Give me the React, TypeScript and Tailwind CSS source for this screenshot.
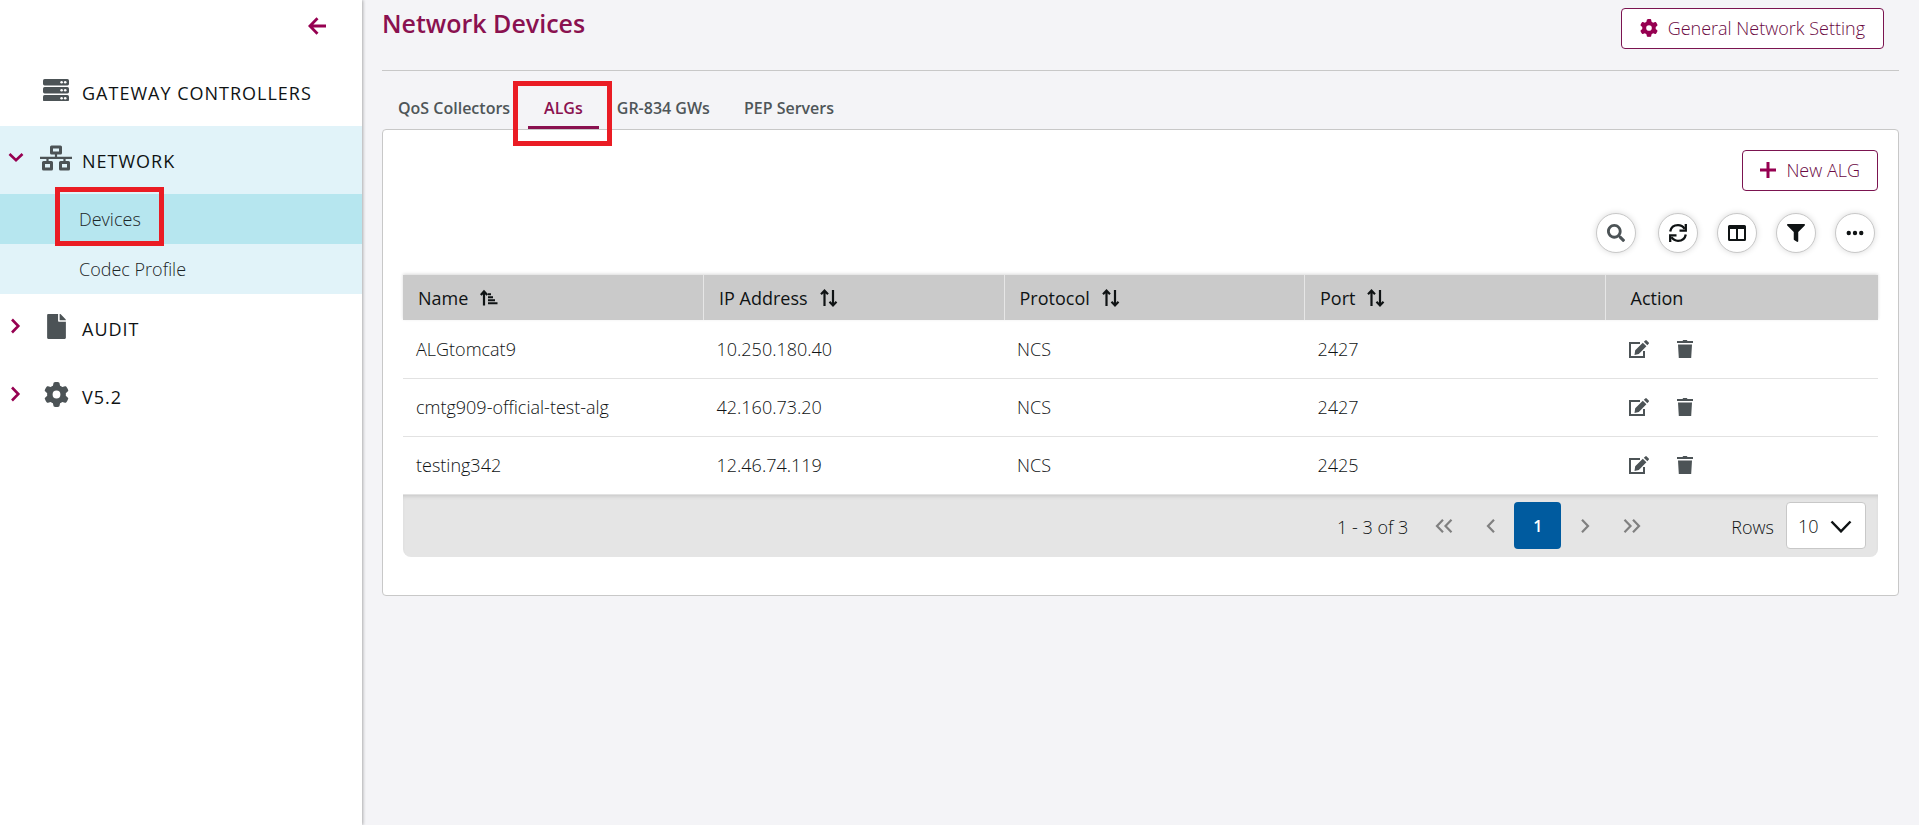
import type { ReactNode } from "react";
import { FaFile, FaFilter, FaSearch } from "react-icons/fa";
import { FaEllipsis, FaGear } from "react-icons/fa6";

function ServerIcon() {
  return (
    <svg width="26" height="22" viewBox="0 0 26 22" fill="currentColor" aria-hidden="true">
      {[0, 8, 16].map((y) => (
        <g key={y}>
          <rect x="0" y={y} width="26" height="6.4" rx="1.6" />
          <circle cx="18.6" cy={y + 3.2} r="1.3" fill="#fff" />
          <circle cx="22.2" cy={y + 3.2} r="1.3" fill="#fff" />
        </g>
      ))}
    </svg>
  );
}

function NetworkIcon() {
  return (
    <svg width="32" height="26" viewBox="0 0 32 26" fill="none" stroke="currentColor" aria-hidden="true">
      <g strokeWidth="3" strokeLinejoin="round">
        <rect x="11.5" y="2" width="9" height="6" />
        <rect x="3.5" y="17.5" width="8" height="6.5" />
        <rect x="20.5" y="17.5" width="8" height="6.5" />
      </g>
      <path d="M0 12.8h32M16 9v4M7.5 13v4M24.5 13v4" strokeWidth="2.2" />
    </svg>
  );
}

function ArrowIcon() {
  return (
    <svg width="18" height="18" viewBox="0 0 18 18" fill="none" stroke="currentColor" strokeWidth="2.8" aria-hidden="true">
      <path d="M18 9H2.500M9.500 1.200 1.900 9l7.600 7.800" />
    </svg>
  );
}

function ChevronIcon({ down = false }: { down?: boolean }) {
  return (
    <svg width="16" height="16" viewBox="0 0 16 16" fill="none" stroke="currentColor" strokeWidth="2.600" className={down ? "rotate-90" : ""} aria-hidden="true">
      <path d="m4 1.500 6.300 6.500L4 14.500" />
    </svg>
  );
}

function PlusIcon() {
  return (
    <svg width="16" height="16" viewBox="0 0 16 16" fill="none" stroke="currentColor" strokeWidth="3" aria-hidden="true">
      <path d="M8 0v16M0 8h16" />
    </svg>
  );
}

function SyncIcon() {
  return (
    <svg width="20" height="20" viewBox="0 0 20 20" fill="none" stroke="currentColor" strokeWidth="2.300" aria-hidden="true">
      <path d="M2.200 8.600C3 4.600 6.200 2.200 10 2.200c2.800 0 5 1.200 6.600 3.600" />
      <path d="M17.800 1v6.600H11.500" />
      <path d="M17.800 11.400C17 15.400 13.800 17.800 10 17.800c-2.800 0-5-1.200-6.600-3.600" />
      <path d="M2.200 19v-6.600H8.500" />
    </svg>
  );
}

function ColumnsIcon() {
  return (
    <svg width="18" height="16" viewBox="0 0 18 16" fill="currentColor" aria-hidden="true">
      <path fillRule="evenodd" d="M1.500 0h15A1.500 1.500 0 0 1 18 1.500v13a1.500 1.500 0 0 1-1.500 1.500h-15A1.500 1.500 0 0 1 0 14.500v-13A1.500 1.500 0 0 1 1.500 0ZM2 4v10h6V4H2Zm8 0v10h6V4h-6Z" />
    </svg>
  );
}

function SortIcon() {
  return (
    <svg width="18" height="18" viewBox="0 0 18 18" fill="none" stroke="currentColor" strokeWidth="2.200" aria-hidden="true">
      <path d="M4.500 17V2M1 5.200 4.500 1.600 8 5.200" />
      <path d="M13 1v15M9.500 12.800 13 16.400l3.500-3.600" />
    </svg>
  );
}

function SortAscIcon() {
  return (
    <svg width="18" height="18" viewBox="0 0 18 18" fill="none" stroke="currentColor" strokeWidth="2.200" aria-hidden="true">
      <path d="M4 16.500V3M.8 6 4 2.400 7.300 6" />
      <path d="M8 5.200h3M8 8.200h5M8 11.200h7M8 14.200h9.500" strokeWidth="2" />
    </svg>
  );
}

function EditIcon() {
  return (
    <svg width="20" height="18" viewBox="0 0 20 18" aria-hidden="true">
      <path d="M11 3H1v14h14v-6" fill="none" stroke="currentColor" strokeWidth="2" />
      <path d="M5.500 15 6.200 10.300 13.800 2.700l3.600 3.600-7.600 7.600L5.500 15ZM14.800 1.800l1.500-1.400a1 1 0 0 1 1.400 0l2 2a1 1 0 0 1 0 1.400L18.300 5.300 14.800 1.800Z" fill="currentColor" />
    </svg>
  );
}

function TrashIcon() {
  return (
    <svg width="16" height="18" viewBox="0 0 16 18" fill="currentColor" aria-hidden="true">
      <path d="M5.500 1 6.200 0h3.600l.7 1H16v2H0V1h5.500ZM1 4.500h14L14.200 18H1.800L1 4.500Z" />
    </svg>
  );
}

function Angle({ double = false, flip = false }: { double?: boolean; flip?: boolean }) {
  return (
    <svg width="18" height="14" viewBox="0 0 18 14" fill="none" stroke="currentColor" strokeWidth="2.200" className={flip ? "rotate-180" : ""} aria-hidden="true">
      {double ? <path d="M8 .8 2 7l6 6.200M16.500.8l-6 6.200 6 6.200" /> : <path d="M12 .8 6 7l6 6.200" />}
    </svg>
  );
}

function Mark({ className }: { className: string }) {
  return <span aria-hidden="true" className={`pointer-events-none absolute z-10 border-[5px] border-[#ea1c24] ${className}`} />;
}

function NavItem({ icon, label, chevron, active = false }: { icon: ReactNode; label: string; chevron?: ReactNode; active?: boolean }) {
  return (
    <a href="#" className={`flex h-[68px] items-center ${active ? "bg-[#e1f3f9]" : ""}`}>
      <span className="flex w-8 justify-center pb-1 text-[#960051]">{chevron}</span>
      <span className="flex w-12 justify-center pb-1 text-[#4c5356]">{icon}</span>
      <span className="pt-0.5 pl-0.5 text-lg font-medium tracking-[1px]">{label}</span>
    </a>
  );
}

function RoundButton({ label, children }: { label: string; children: ReactNode }) {
  return (
    <button aria-label={label} className="flex size-10 items-center justify-center rounded-full border border-[#c8c8c8] bg-white shadow-[0_0_6px_rgba(0,0,0,0.15)]">
      {children}
    </button>
  );
}

const tabs = ["QoS Collectors", "ALGs", "GR-834 GWs", "PEP Servers"];
const columns = ["Name", "IP Address", "Protocol", "Port"];
const rows = [
  ["ALGtomcat9", "10.250.180.40", "NCS", "2427"],
  ["cmtg909-official-test-alg", "42.160.73.20", "NCS", "2427"],
  ["testing342", "12.46.74.119", "NCS", "2425"],
];

export default function App() {
  return (
    <div className="flex min-h-screen bg-[#f4f4f7] font-['Open_Sans',sans-serif] text-lg font-light text-[#0f1314]">
      <aside className="w-[362px] shrink-0 bg-white shadow-[1px_0_3px_rgba(0,0,0,0.3)]">
        <div className="flex h-[58px] justify-end pt-4 pr-9">
          <button aria-label="Collapse menu" className="flex h-5 items-center text-[#960051]">
            <ArrowIcon />
          </button>
        </div>
        <nav>
          <NavItem icon={<ServerIcon />} label="GATEWAY CONTROLLERS" />
          <NavItem active icon={<NetworkIcon />} label="NETWORK" chevron={<ChevronIcon down />} />
          <a href="#" aria-current="page" className="relative flex h-[50px] items-center bg-[#b6e6ef] pl-[79px] text-[#1c2527]">
            Devices
            <Mark className="-top-[7px] left-[55px] h-[59px] w-[109px]" />
          </a>
          <a href="#" className="flex h-[50px] items-center bg-[#e1f3f9] pl-[79px] text-[#1c2527]">
            Codec Profile
          </a>
          <NavItem icon={<FaFile size={25} />} label="AUDIT" chevron={<ChevronIcon />} />
          <NavItem icon={<FaGear size={25} />} label="V5.2" chevron={<ChevronIcon />} />
        </nav>
      </aside>

      <main className="min-w-0 grow px-5">
        <header className="flex h-[71px] items-start justify-between border-b border-[#c8c8c8] pt-2 pr-[15px]">
          <h1 className="text-[25px] leading-[30px] font-semibold text-[#8a1150]">Network Devices</h1>
          <button className="flex h-[41px] items-center gap-2.5 rounded border border-[#7b1450] bg-white px-[18px] pb-0.5 text-[#6b0a43]">
            <FaGear size={18} className="text-[#960051]" />
            General Network Setting
          </button>
        </header>

        <div role="tablist" className="flex h-[58px] items-end gap-0.5 text-base font-semibold text-[#4f5659]">
          {tabs.map((tab) => (
            <button
              key={tab}
              role="tab"
              aria-selected={tab === "ALGs"}
              className={`relative h-[41px] border-b-[3px] px-4 pt-0.5 ${tab === "ALGs" ? "border-[#8a1150] text-[#8a1150]" : "border-transparent"}`}
            >
              {tab}
              {tab === "ALGs" && <Mark className="-top-[7px] -left-[15px] h-[65px] w-[99px]" />}
            </button>
          ))}
        </div>

        <section className="rounded border border-[#c8c8c8] bg-white px-5 pt-5 pb-[38px]">
          <div className="flex justify-end">
            <button className="flex h-[41px] items-center gap-2.5 rounded border border-[#7b1450] px-[17px] pb-0.5 text-[#6b0a43]">
              <span className="text-[#960051]"><PlusIcon /></span>
              New ALG
            </button>
          </div>
          <div className="flex justify-end gap-[22px] py-[22px] pr-[3px]">
            <RoundButton label="Search"><FaSearch size={18} className="text-[#4c5356]" /></RoundButton>
            <div className="flex gap-[19px]">
              <RoundButton label="Refresh"><SyncIcon /></RoundButton>
              <RoundButton label="Columns"><ColumnsIcon /></RoundButton>
              <RoundButton label="Filter"><FaFilter size={18} /></RoundButton>
              <RoundButton label="More"><FaEllipsis size={20} /></RoundButton>
            </div>
          </div>

          <table className="w-full table-fixed border-collapse text-left">
            <thead className="bg-[#cacaca] shadow-[0_-1px_3px_rgba(0,0,0,0.15)]">
              <tr className="h-[45px]">
                {columns.map((column) => (
                  <th key={column} className="border-r border-[#e6e6e6] pl-[15px] font-medium">
                    <button className="flex items-center gap-3">
                      {column}
                      {column === "Name" ? <SortAscIcon /> : <SortIcon />}
                    </button>
                  </th>
                ))}
                <th className="w-[273px] pl-[25px] font-medium">Action</th>
              </tr>
            </thead>
            <tbody>
              {rows.map((row) => (
                <tr key={row[0]} className="h-[58px] border-b border-[#e2e2e2]">
                  {row.map((cell, i) => (
                    <td key={i} className="pl-[13px]">{cell}</td>
                  ))}
                  <td className="pl-6">
                    <div className="flex items-center gap-7 text-[#4c5356]">
                      <button aria-label={`Edit ${row[0]}`}><EditIcon /></button>
                      <button aria-label={`Delete ${row[0]}`}><TrashIcon /></button>
                    </div>
                  </td>
                </tr>
              ))}
            </tbody>
          </table>

          <footer className="flex h-[62px] items-center justify-end rounded-b-lg bg-[#e5e5e5] pr-3 shadow-[inset_0_3px_4px_-2px_rgba(0,0,0,0.15)]">
            <span className="pt-0.5 pr-3">1 - 3 of 3</span>
            <div className="flex text-[#808080]">
              <button aria-label="First page" className="flex size-[47px] items-center justify-center"><Angle double /></button>
              <button aria-label="Previous page" className="flex size-[47px] items-center justify-center"><Angle /></button>
              <button aria-current="page" className="size-[47px] rounded bg-[#005b9f] text-base font-semibold text-white">1</button>
              <button aria-label="Next page" className="flex size-[47px] items-center justify-center"><Angle flip /></button>
              <button aria-label="Last page" className="flex size-[47px] items-center justify-center"><Angle double flip /></button>
            </div>
            <label htmlFor="rows" className="pt-0.5 pr-3 pl-[76px]">Rows</label>
            <div className="relative">
              <select id="rows" defaultValue="10" className="h-[47px] w-20 appearance-none rounded border border-[#c8c8c8] bg-white pl-[11px]">
                <option>10</option>
                <option>25</option>
                <option>50</option>
              </select>
              <svg width="22" height="13" viewBox="0 0 22 13" fill="none" stroke="currentColor" strokeWidth="2.500" className="pointer-events-none absolute top-[18px] right-3.5" aria-hidden="true">
                <path d="m1.500 1.500 9.500 9.800 9.500-9.800" />
              </svg>
            </div>
          </footer>
        </section>
      </main>
    </div>
  );
}
